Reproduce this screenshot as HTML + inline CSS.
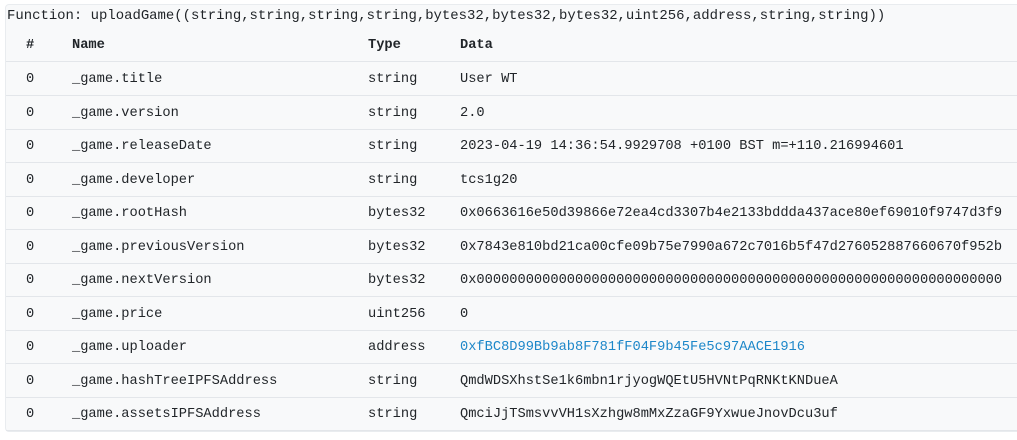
<!DOCTYPE html>
<html><head><style>
body{margin:0;width:1017px;height:440px;background:#fff;overflow:hidden;font-family:"Liberation Mono",monospace;color:#212529}
.box{position:absolute;left:5px;top:4px;width:1030px;height:426px;background:#f8f9fa;border:1px solid #e9ecef;border-radius:4px}
.fn{position:absolute;left:7px;top:8px;font-size:13.95px;white-space:nowrap}
.row{position:absolute;left:6px;width:1030px;height:33px;border-bottom:1px solid #e3e6ea;font-size:13.7px;white-space:nowrap}
.row span{position:absolute;top:10px}
.h span{font-weight:bold}
.a{left:20px}.b{left:66px}.c{left:362px}.d{left:454px}
.blue{color:#1d87c9}
</style></head><body>
<div class="box"></div>
<div class="fn">Function: uploadGame((string,string,string,string,bytes32,bytes32,bytes32,uint256,address,string,string))</div>
<div class="row h" style="top:28px"><span class="a">#</span><span class="b">Name</span><span class="c">Type</span><span class="d">Data</span></div>
<div class="row" style="top:62px"><span class="a">0</span><span class="b">_game.title</span><span class="c">string</span><span class="d">User WT</span></div>
<div class="row" style="top:95.5px"><span class="a">0</span><span class="b">_game.version</span><span class="c">string</span><span class="d">2.0</span></div>
<div class="row" style="top:129px"><span class="a">0</span><span class="b">_game.releaseDate</span><span class="c">string</span><span class="d">2023-04-19 14:36:54.9929708 +0100 BST m=+110.216994601</span></div>
<div class="row" style="top:162.5px"><span class="a">0</span><span class="b">_game.developer</span><span class="c">string</span><span class="d">tcs1g20</span></div>
<div class="row" style="top:196px"><span class="a">0</span><span class="b">_game.rootHash</span><span class="c">bytes32</span><span class="d">0x0663616e50d39866e72ea4cd3307b4e2133bddda437ace80ef69010f9747d3f9</span></div>
<div class="row" style="top:229.5px"><span class="a">0</span><span class="b">_game.previousVersion</span><span class="c">bytes32</span><span class="d">0x7843e810bd21ca00cfe09b75e7990a672c7016b5f47d276052887660670f952b</span></div>
<div class="row" style="top:263px"><span class="a">0</span><span class="b">_game.nextVersion</span><span class="c">bytes32</span><span class="d">0x0000000000000000000000000000000000000000000000000000000000000000</span></div>
<div class="row" style="top:296.5px"><span class="a">0</span><span class="b">_game.price</span><span class="c">uint256</span><span class="d">0</span></div>
<div class="row" style="top:330px"><span class="a">0</span><span class="b">_game.uploader</span><span class="c">address</span><span class="d blue">0xfBC8D99Bb9ab8F781fF04F9b45Fe5c97AACE1916</span></div>
<div class="row" style="top:363.5px"><span class="a">0</span><span class="b">_game.hashTreeIPFSAddress</span><span class="c">string</span><span class="d">QmdWDSXhstSe1k6mbn1rjyogWQEtU5HVNtPqRNKtKNDueA</span></div>
<div class="row" style="top:397px"><span class="a">0</span><span class="b">_game.assetsIPFSAddress</span><span class="c">string</span><span class="d">QmciJjTSmsvvVH1sXzhgw8mMxZzaGF9YxwueJnovDcu3uf</span></div>
</body></html>
